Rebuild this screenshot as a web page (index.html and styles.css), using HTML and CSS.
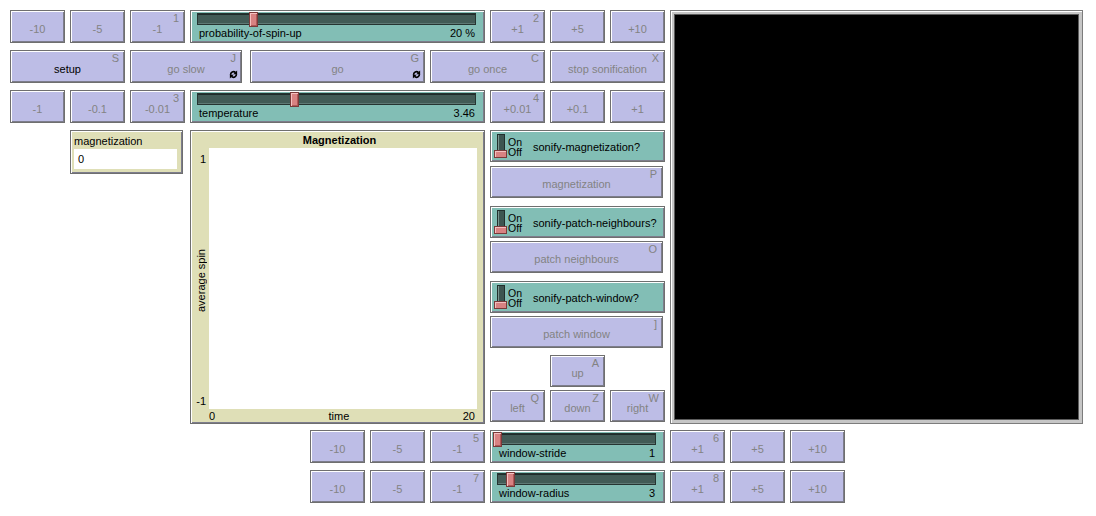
FILE: index.html
```html
<!DOCTYPE html>
<html>
<head>
<meta charset="utf-8">
<link rel="stylesheet" href="styles.css">
</head>
<body>
<div class="iface">
  <div class="top">
    <div class="left">
      <div class="row">
        <div class="w btn">-10</div>
        <div class="w btn">-5</div>
        <div class="w btn">-1<span class="key">1</span></div>
        <div class="w slider">
          <div class="track"><div class="handle" style="left:51px"></div></div>
          <div class="slabel"><span>probability-of-spin-up</span><span>20 %</span></div>
        </div>
        <div class="w btn">+1<span class="key">2</span></div>
        <div class="w btn">+5</div>
        <div class="w btn">+10</div>
      </div>
      <div class="row">
        <div class="w btn dark wide">setup<span class="key">S</span></div>
        <div class="w btn slow">go slow<span class="key">J</span>
          <svg class="forever" viewBox="0 0 10 10"><path d="M1.8 5.4A3.2 3.2 0 0 1 7.2 2.8" /><polygon points="9,0.6 9,4.8 4.8,4.8"/><path d="M8.2 4.6A3.2 3.2 0 0 1 2.8 7.2"/><polygon points="1,9.4 1,5.2 5.2,5.2"/></svg>
        </div>
        <div class="w btn go">go<span class="key">G</span>
          <svg class="forever" viewBox="0 0 10 10"><path d="M1.8 5.4A3.2 3.2 0 0 1 7.2 2.8" /><polygon points="9,0.6 9,4.8 4.8,4.8"/><path d="M8.2 4.6A3.2 3.2 0 0 1 2.8 7.2"/><polygon points="1,9.4 1,5.2 5.2,5.2"/></svg>
        </div>
        <div class="w btn wide">go once<span class="key">C</span></div>
        <div class="w btn wide">stop sonification<span class="key">X</span></div>
      </div>
      <div class="row">
        <div class="w btn">-1</div>
        <div class="w btn">-0.1</div>
        <div class="w btn">-0.01<span class="key">3</span></div>
        <div class="w slider">
          <div class="track"><div class="handle" style="left:92px"></div></div>
          <div class="slabel"><span>temperature</span><span>3.46</span></div>
        </div>
        <div class="w btn">+0.01<span class="key">4</span></div>
        <div class="w btn">+0.1</div>
        <div class="w btn">+1</div>
      </div>
      <div class="middle">
        <div class="w monitor">
          <div class="mlabel">magnetization</div>
          <div class="mvalue">0</div>
        </div>
        <div class="w plot">
          <div class="ptitle">Magnetization</div>
          <div class="ylabels">
            <span>1</span>
            <span class="yname">average spin</span>
            <span>-1</span>
          </div>
          <div class="parea"></div>
          <div class="xlabels"><span>0</span><span>time</span><span>20</span></div>
        </div>
        <div class="rcol">
          <div class="w switch">
            <div class="tog"><div class="bar"></div><div class="knob"></div></div>
            <div class="onoff"><span>On</span><span>Off</span></div>
            <div class="swlabel">sonify-magnetization?</div>
          </div>
          <div class="w btn long m4">magnetization<span class="key">P</span></div>
          <div class="w switch m8">
            <div class="tog"><div class="bar"></div><div class="knob"></div></div>
            <div class="onoff"><span>On</span><span>Off</span></div>
            <div class="swlabel">sonify-patch-neighbours?</div>
          </div>
          <div class="w btn long m3">patch neighbours<span class="key">O</span></div>
          <div class="w switch m8">
            <div class="tog"><div class="bar"></div><div class="knob"></div></div>
            <div class="onoff"><span>On</span><span>Off</span></div>
            <div class="swlabel">sonify-patch-window?</div>
          </div>
          <div class="w btn long m3">patch window<span class="key">]</span></div>
          <div class="arrows up-row">
            <div class="w btn arrow">up<span class="key">A</span></div>
          </div>
          <div class="arrows m3">
            <div class="w btn arrow">left<span class="key">Q</span></div>
            <div class="w btn arrow">down<span class="key">Z</span></div>
            <div class="w btn arrow">right<span class="key">W</span></div>
          </div>
        </div>
      </div>
    </div>
    <div class="view"><div class="screen"></div></div>
  </div>
  <div class="brow first">
    <div class="w btn">-10</div>
    <div class="w btn">-5</div>
    <div class="w btn">-1<span class="key">5</span></div>
    <div class="w slider small">
      <div class="track"><div class="handle" style="left:-5px"></div></div>
      <div class="slabel"><span>window-stride</span><span>1</span></div>
    </div>
    <div class="w btn">+1<span class="key">6</span></div>
    <div class="w btn">+5</div>
    <div class="w btn">+10</div>
  </div>
  <div class="brow second">
    <div class="w btn">-10</div>
    <div class="w btn">-5</div>
    <div class="w btn">-1<span class="key">7</span></div>
    <div class="w slider small">
      <div class="track"><div class="handle" style="left:8px"></div></div>
      <div class="slabel"><span>window-radius</span><span>3</span></div>
    </div>
    <div class="w btn">+1<span class="key">8</span></div>
    <div class="w btn">+5</div>
    <div class="w btn">+10</div>
  </div>
</div>
</body>
</html>
```

FILE: styles.css
```css
* { box-sizing: border-box; }
body {
  margin: 0;
  background: #ffffff;
  font: 11px "Liberation Sans", Arial, sans-serif;
  color: #000;
}
.iface { padding: 10px 0 0 10px; width: 1096px; }
.top { display: flex; gap: 5px; }
.left { width: 655px; display: flex; flex-direction: column; gap: 7px; }
.row { display: flex; gap: 5px; height: 33px; }

.w {
  position: relative;
  border: 1px solid #6f6f6f;
  box-shadow: inset 1px 1px 0 #ffffff, inset -1px -1px 0 #7d7d8c;
}

.btn {
  background: #bdbde6;
  width: 55px;
  display: flex;
  align-items: center;
  justify-content: center;
  padding-top: 4px;
  color: #838383;
  white-space: nowrap;
}
.btn.dark { color: #000; }
.btn.wide { width: 115px; }
.btn.slow { width: 112px; margin-right: 3px; }
.btn.go { width: 175px; }
.btn.long { width: 173px; height: 32px; flex: none; }
.btn.arrow { height: 32px; }
.key {
  position: absolute;
  top: 1px;
  right: 5px;
  color: #838383;
  line-height: 12px;
}
.forever {
  position: absolute;
  right: 3px;
  bottom: 3px;
  width: 9px;
  height: 9px;
}
.forever path { fill: none; stroke: #000; stroke-width: 1.9; }
.forever polygon { fill: #000; }

.slider {
  background: #82beb5;
  width: 295px;
  padding: 2px 8px 0 6px;
}
.slider.small { width: 175px; }
.track {
  position: relative;
  height: 12px;
  background: #425b56;
  border: 1px solid #263532;
  box-shadow: inset 0 1px 0 #1f2c2a, inset 0 -1px 0 #5f7a75;
}
.handle {
  position: absolute;
  top: -2px;
  width: 9px;
  height: 15px;
  background: #d88282;
  border: 1px solid #7a3a3a;
  box-shadow: inset 1px 1px 0 #f4c0c0, inset -1px -1px 0 #b05858;
}
.slabel {
  display: flex;
  justify-content: space-between;
  margin-top: 2px;
  line-height: 13px;
  padding: 0 1px 0 2px;
}

.middle { display: flex; height: 294px; }
.monitor {
  margin-left: 60px;
  width: 113px;
  height: 44px;
  background: #dfdfb7;
  padding: 4px 5px 0 3px;
}
.mlabel { line-height: 12px; }
.mvalue {
  margin-top: 2px;
  height: 20px;
  background: #ffffff;
  padding: 4px 0 0 4px;
  line-height: 12px;
}
.plot {
  margin-left: 7px;
  width: 295px;
  height: 294px;
  background: #dfdfb7;
  display: grid;
  grid-template-columns: 18px 268px 1fr;
  grid-template-rows: 17px 261px 1fr;
}
.ptitle {
  grid-column: 1 / 4;
  text-align: center;
  font-weight: bold;
  line-height: 13px;
  padding-top: 3px;
  padding-left: 4px;
}
.ylabels {
  display: flex;
  flex-direction: column;
  justify-content: space-between;
  align-items: flex-end;
  padding: 5px 3px 2px 0;
  line-height: 12px;
}
.yname {
  writing-mode: vertical-rl;
  transform: rotate(180deg);
  align-self: flex-start;
  margin-left: 4px;
  line-height: 12px;
}
.parea { background: #ffffff; }
.xlabels {
  grid-column: 2 / 3;
  display: flex;
  justify-content: space-between;
  line-height: 12px;
  padding: 1px 2px 0 0;
}

.rcol {
  margin-left: 5px;
  width: 175px;
  display: flex;
  flex-direction: column;
}
.switch {
  background: #82beb5;
  width: 175px;
  height: 32px;
  display: flex;
  align-items: center;
  flex: none;
}
.tog {
  position: relative;
  width: 13px;
  height: 24px;
  margin-left: 3px;
}
.bar {
  margin-left: 3px;
  width: 8px;
  height: 24px;
  background: #3d5550;
  border: 1px solid #222f2c;
  box-shadow: inset 1px 0 0 #7a9690;
}
.knob {
  position: absolute;
  left: 0;
  bottom: 0;
  width: 13px;
  height: 8px;
  background: #d88282;
  border: 1px solid #7a3a3a;
  box-shadow: inset 1px 1px 0 #f4c0c0;
}
.onoff {
  width: 21px;
  margin-left: 1px;
  display: flex;
  flex-direction: column;
  font-size: 10.5px;
  line-height: 10px;
  padding-top: 1px;
}
.swlabel { margin-left: 4px; padding-top: 1px; }
.m3 { margin-top: 3px; }
.m4 { margin-top: 4px; }
.m8 { margin-top: 8px; }
.arrows { display: flex; gap: 5px; height: 32px; }
.up-row { margin-top: 7px; padding-left: 60px; }

.view {
  width: 413px;
  height: 414px;
  border: 1px solid #7c7c7c;
  background: #c6c6c6;
  padding: 3px;
  box-shadow: inset 1px 1px 0 #ffffff;
}
.screen {
  width: 100%;
  height: 100%;
  background: #000;
  border: 1px solid #5c5c5c;
}

.brow { display: flex; gap: 5px; height: 33px; margin-left: 300px; }
.brow.first { margin-top: 6px; }
.brow.second { margin-top: 7px; }
```
